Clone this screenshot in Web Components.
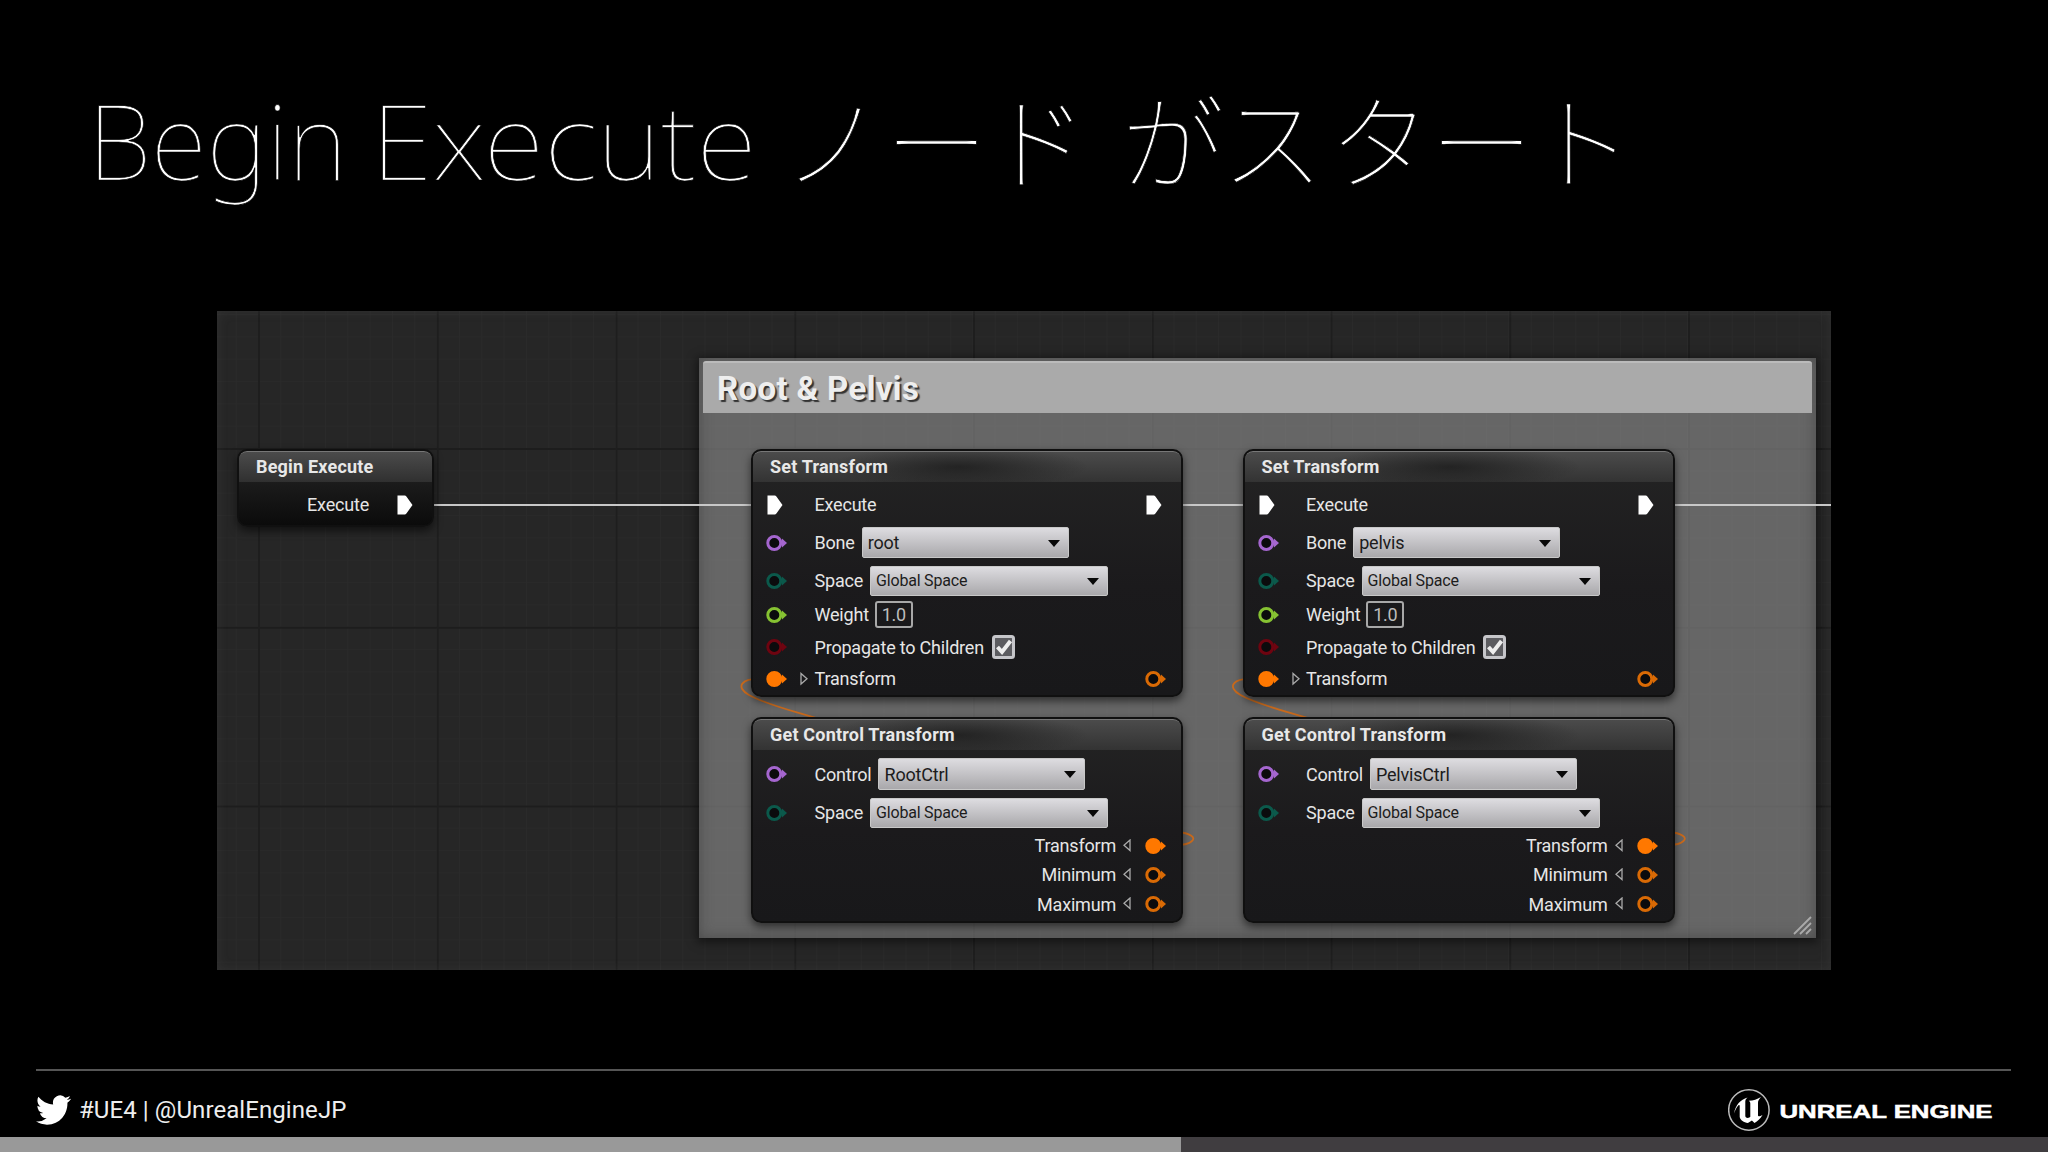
<!DOCTYPE html>
<html lang="ja">
<head>
<meta charset="utf-8">
<title>Begin Execute</title>
<style>
    html, body {
        margin: 0;
        height: 100%;
        background: #000;
        overflow: hidden;
        font-family: Roboto, "Noto Sans CJK JP", sans-serif;
    }
</style>
</head>
<body>
<slide-page>
    <slide-title slot="title"></slide-title>
    <graph-canvas>
        <graph-comment label="Root &amp; Pelvis"></graph-comment>
        <graph-wires></graph-wires>
        <graph-node class="begin" label="Begin Execute" style="left:20px; top:138px; width:197px; height:78px">
            <node-row h="45" out="exec" type="exec" near>Execute</node-row>
        </graph-node>
        <graph-node label="Set Transform" style="left:534px; top:138px; width:432px; height:248px">
            <node-row h="45" in="exec" out="exec">Execute</node-row>
            <node-row h="31" in="#a566cf">Bone<drop-down w="207" h="31" size="18">root</drop-down></node-row>
            <node-row h="45" in="#0b594b">Space<drop-down w="238" h="30" size="16">Global Space</drop-down></node-row>
            <node-row h="23" in="#86c232">Weight<value-box>1.0</value-box></node-row>
            <node-row h="42" in="#6e0410">Propagate to Children<check-box></check-box></node-row>
            <node-row h="21" in="#ff7800" filled arrow out="#d96a05">Transform</node-row>
        </graph-node>
        <graph-node label="Get Control Transform" style="left:534px; top:406px; width:432px; height:206px">
            <node-row h="48" in="#a566cf">Control<drop-down w="207" h="32" size="18">RootCtrl</drop-down></node-row>
            <node-row h="29" in="#0b594b">Space<drop-down w="238" h="30" size="16">Global Space</drop-down></node-row>
            <node-row h="37" out="#ff7800" filled back near>Transform</node-row>
            <node-row h="21" out="#d96a05" back near>Minimum</node-row>
            <node-row h="38" out="#d96a05" back near>Maximum</node-row>
        </graph-node>
        <graph-node label="Set Transform" style="left:1025.5px; top:138px; width:432px; height:248px">
            <node-row h="45" in="exec" out="exec">Execute</node-row>
            <node-row h="31" in="#a566cf">Bone<drop-down w="207" h="31" size="18">pelvis</drop-down></node-row>
            <node-row h="45" in="#0b594b">Space<drop-down w="238" h="30" size="16">Global Space</drop-down></node-row>
            <node-row h="23" in="#86c232">Weight<value-box>1.0</value-box></node-row>
            <node-row h="42" in="#6e0410">Propagate to Children<check-box></check-box></node-row>
            <node-row h="21" in="#ff7800" filled arrow out="#d96a05">Transform</node-row>
        </graph-node>
        <graph-node label="Get Control Transform" style="left:1025.5px; top:406px; width:432px; height:206px">
            <node-row h="48" in="#a566cf">Control<drop-down w="207" h="32" size="18">PelvisCtrl</drop-down></node-row>
            <node-row h="29" in="#0b594b">Space<drop-down w="238" h="30" size="16">Global Space</drop-down></node-row>
            <node-row h="37" out="#ff7800" filled back near>Transform</node-row>
            <node-row h="21" out="#d96a05" back near>Minimum</node-row>
            <node-row h="38" out="#d96a05" back near>Maximum</node-row>
        </graph-node>
    </graph-canvas>
    <slide-footer slot="footer">#UE4 | @UnrealEngineJP</slide-footer>
</slide-page>

<script>
    function define(name, render) {
        customElements.define(name, class extends HTMLElement {
            constructor() {
                super();
                const template = document.createElement('template');
                template.innerHTML = render(this);
                this.attachShadow({ mode: 'open' }).appendChild(template.content.cloneNode(true));
            }
        });
    }

    // white execution pins and coloured data pins share one box
    function pin(type, filled) {
        if (!type) return '';
        if (type === 'exec') {
            return `<svg width="21" height="22" viewBox="0 0 21 22"><path d="M1.500 1.500h7.200q1 0 1.700 1L16.500 11l-6.100 8.500q-.700 1-1.700 1H1.500z" fill="#fff"/></svg>`;
        }
        return `<svg width="21" height="22" viewBox="0 0 21 22"><circle cx="8.300" cy="11" r="6.500" fill="${filled ? type : '#0b0b0d'}" stroke="${type}" stroke-width="3"/><path d="M16 6.500L21 11l-5 4.500z" fill="${type}"/></svg>`;
    }

    define('slide-page', () => `
        <style>
            :host {
                display: flex;
                flex-direction: column;
                width: 2048px;
                height: 1152px;
                background: #000;
            }
            .title { height: 311px; }
            .graph { flex: 1; padding-left: 217px; }
        </style>
        <div class="title"><slot name="title"></slot></div>
        <div class="graph"><slot></slot></div>
        <slot name="footer"></slot>
    `);

    define('slide-title', () => `
        <style>
            :host { display: block; }
            svg { display: block; }
            /* black outline shaves the strokes down to a hairline */
            text { fill: #fff; font-weight: 100; stroke: #000; stroke-width: 0.7; }
            .latin { font-family: "Noto Sans", Roboto, sans-serif; font-size: 103px; }
            .kana { font-family: "Noto Sans CJK JP", sans-serif; font-size: 103px; }
        </style>
        <svg width="2048" height="260">
            <text class="latin" x="88" y="179.500" textLength="259" lengthAdjust="spacingAndGlyphs">Begin</text>
            <text class="latin" x="371" y="179.500" textLength="386" lengthAdjust="spacingAndGlyphs">Execute</text>
            <text class="kana" x="781 885 986" y="182">ノード</text>
            <text class="kana" x="1121 1221 1328 1430 1530" y="182">がスタート</text>
        </svg>
    `);

    define('graph-canvas', () => `
        <style>
            :host {
                display: block;
                position: relative;
                width: 1614px;
                height: 659px;
                overflow: hidden;
                background-color: #262626;
                background-image:
                    linear-gradient(90deg, #1e1e1e 2px, transparent 2px),
                    linear-gradient(#1d1d1d 2px, transparent 2px),
                    linear-gradient(90deg, #2a2a2a 1px, transparent 1px),
                    linear-gradient(#292929 1px, transparent 1px);
                background-size: 178.750px 178.750px, 178.750px 178.750px, 22.340px 22.340px, 22.340px 22.340px;
                background-position: 41px 0, 0 137px, 41px 0, 0 137px;
            }
            .edge {
                position: absolute;
                inset: 0;
                box-shadow: inset 0 0 12px rgba(110, 110, 110, 0.18);
            }
        </style>
        <div class="edge"></div>
        <slot></slot>
    `);

    define('graph-comment', el => `
        <style>
            :host {
                position: absolute;
                left: 482px;
                top: 47px;
                width: 1117px;
                height: 580px;
                box-sizing: border-box;
                padding: 3px 4px;
                background: rgba(139, 139, 139, 0.64);
                box-shadow: 0 2px 9px 2px rgba(0, 0, 0, 0.5), inset 0 0 14px rgba(50, 50, 50, 0.5);
            }
            .bar {
                display: flex;
                align-items: center;
                height: 52px;
                box-sizing: border-box;
                padding-left: 14px;
                border-radius: 3px 3px 0 0;
                border-top: 2px solid #bbb;
                background: #aaa;
                color: #eee;
                font-size: 33px;
                font-weight: 700;
                letter-spacing: 0.350px;
                text-shadow: 2px 2px 1px #333;
            }
            svg { position: absolute; right: 3px; bottom: 2px; }
        </style>
        <div class="bar">${el.getAttribute('label').replace('&', '&amp;')}</div>
        <svg width="20" height="20" fill="none" stroke="#aaa" stroke-width="1.800"><path d="M1 18L18 1M7 18L18 7M13 18l5-5"/></svg>
    `);

    define('graph-wires', () => `
        <style>
            :host { position: absolute; inset: 0; }
        </style>
        <svg width="1614" height="659" fill="none">
            <path d="M216 194H534M966 194h60M1458 194h156" stroke="#c8c8c8" stroke-width="2"/>
            <g id="link" stroke="#c96a1c" stroke-width="1.800">
                <path d="M545 368C524 367 518 376 532 384C550 394 580 401 602 408"/>
                <path d="M960 521C974 522 979 527 975 530C972 533 967 534 960 534"/>
            </g>
            <use href="#link" x="491.500"/>
        </svg>
    `);

    define('graph-node', el => `
        <style>
            :host {
                position: absolute;
                display: flex;
                flex-direction: column;
                box-sizing: border-box;
                border: 2px solid #101010;
                border-radius: 10px;
                overflow: hidden;
                background: linear-gradient(#242424, #1b1a1c 55%, #18181a);
                box-shadow: 0 4px 8px rgba(0, 0, 0, 0.55);
                color: #e6e6e6;
                font-size: 18px;
                letter-spacing: -0.200px;
            }
            :host(.begin) { background: linear-gradient(#1c1c1c 40%, #0b0b0b); }
            header {
                flex: none;
                height: 31px;
                box-sizing: border-box;
                padding-left: 17px;
                border-top: 1.500px solid #777;
                border-radius: 8px 8px 0 0;
                background:
                    radial-gradient(ellipse 130px 22px at 48% 50%, rgba(20, 20, 20, 0.650), transparent),
                    linear-gradient(#4b4b4b, #333);
                line-height: 29px;
                font-weight: 700;
                letter-spacing: 0.200px;
                color: #e8e8e8;
                white-space: nowrap;
            }
            :host(.begin) header { background: linear-gradient(#4b4b4b, #303030); }
        </style>
        <header>${el.getAttribute('label')}</header>
        <slot></slot>
    `);

    define('node-row', el => {
        const filled = el.hasAttribute('filled');
        const near = el.hasAttribute('near');
        const back = el.hasAttribute('back');
        return `
        <style>
            :host {
                display: flex;
                flex: none;
                align-items: center;
                height: ${el.getAttribute('h')}px;
                padding: 0 15px 0 13px;
                white-space: nowrap;
            }
            svg { display: block; flex: none; }
            .in { width: 48.500px; display: flex; align-items: center; }
            .arrow { margin-left: 12px; }
            .label { display: flex; align-items: center; ${near ? 'margin-left: auto;' : ''} }
            .out { margin-left: ${near ? (back ? '13px' : '27px') : 'auto'}; }
            .back { margin-left: 6px; }
        </style>
        ${near ? '' : `<span class="in">${pin(el.getAttribute('in'), filled)}${el.hasAttribute('arrow') ? '<svg class="arrow" width="10" height="14" fill="none" stroke="#aaa" stroke-width="1.300"><path d="M2 1.500v10.500l6-5.200z"/></svg>' : ''}</span>`}
        <span class="label"><slot></slot></span>
        ${back ? '<svg class="back" width="10" height="14" fill="none" stroke="#aaa" stroke-width="1.300"><path d="M8 1v10.500L2 6.300z"/></svg>' : ''}
        <span class="out">${pin(el.getAttribute('out'), filled && near)}</span>
    `;
    });

    define('drop-down', el => `
        <style>
            :host {
                display: flex;
                align-items: center;
                justify-content: space-between;
                box-sizing: border-box;
                width: ${el.getAttribute('w')}px;
                height: ${el.getAttribute('h')}px;
                margin-left: 7px;
                padding: 0 8px 0 5px;
                border: 1px solid #c8c8c8;
                border-radius: 2px;
                background: linear-gradient(#dddce0, #a9a8ab);
                color: #1c1c1c;
                font-size: ${el.getAttribute('size')}px;
            }
            svg { margin-top: 1px; }
        </style>
        <span><slot></slot></span>
        <svg width="12" height="7"><path d="M0 0h12L6 7z" fill="#080808"/></svg>
    `);

    define('value-box', () => `
        <style>
            :host {
                display: flex;
                align-items: center;
                justify-content: center;
                box-sizing: border-box;
                width: 38px;
                height: 27px;
                margin-left: 6px;
                border: 2px solid #a8a8a8;
                border-radius: 3px;
                color: #bdbdbd;
            }
        </style>
        <slot></slot>
    `);

    define('check-box', () => `
        <style>
            :host { display: block; margin-left: 8px; }
            svg { display: block; }
        </style>
        <svg width="23" height="24">
            <rect x="1.500" y="1.500" width="20" height="21" rx="2" fill="#5c5c60" stroke="#c6c6ca" stroke-width="3"/>
            <path d="M5.500 12l4.500 5L18.500 6" fill="none" stroke="#eee" stroke-width="4"/>
        </svg>
    `);

    define('slide-footer', () => `
        <style>
            :host { display: block; height: 83px; color: #eee; font-size: 24px; }
            .line { height: 2px; margin: 0 37px 0 36px; background: #555; }
            .row { display: flex; align-items: center; height: 65.500px; padding: 13px 50px 0 36px; box-sizing: border-box; }
            .tag { margin-left: 8px; flex: 1; letter-spacing: 0.080px; }
            svg { display: block; }
            .logo text { font: 700 19px "Liberation Sans", Arial, sans-serif; fill: #fff; stroke: #fff; stroke-width: 0.500; }
            .bar { height: 15px; background: linear-gradient(90deg, #999 1181px, #403d40 1181px); }
        </style>
        <div class="line"></div>
        <div class="row">
            <svg width="35" height="30" viewBox="0 2 24 20" preserveAspectRatio="none"><path fill="#fff" d="M23.950 4.570a10 10 0 0 1-2.820.770 4.960 4.960 0 0 0 2.160-2.720c-.950.550-2 .950-3.130 1.180a4.920 4.920 0 0 0-8.380 4.480C7.690 8.090 4.070 6.130 1.640 3.160a4.820 4.820 0 0 0-.670 2.480c0 1.710.870 3.210 2.190 4.090a4.900 4.900 0 0 1-2.230-.610v.060a4.920 4.920 0 0 0 3.950 4.830 5 5 0 0 1-2.210.080 4.940 4.940 0 0 0 4.600 3.420A9.870 9.870 0 0 1 0 19.540a13.990 13.990 0 0 0 7.550 2.210c9.050 0 14-7.500 14-13.980 0-.210 0-.420-.020-.630a9.940 9.940 0 0 0 2.460-2.550z"/></svg>
            <span class="tag"><slot></slot></span>
            <svg class="logo" width="270" height="46">
                <circle cx="20.900" cy="23" r="20.200" fill="none" stroke="#bbb" stroke-width="1.500"/>
                <path fill="#fff" d="M6 26.500C7.500 18 12.500 12.500 19.500 10.500c-2 1.500-2.200 3-2.200 5V29c0 2.200 3.800 2.500 5 .800V16.500c0-1.300-.500-2-1.600-2.700 4.800-.300 8.300-1.500 12.300-3.800-2.300 2.500-3 4-3 6v12.200c0 1.600 1.800 1.500 4.500-.200-2.400 4.300-4.800 6-8 8l-2.600-2.500-4 2.500c-4-.500-7.500-2.700-8.200-6V19c0-2.500-2.700-.500-5.700 7.500z"/>
                <text x="51.500" y="31" textLength="213" lengthAdjust="spacingAndGlyphs">UNREAL ENGINE</text>
            </svg>
        </div>
        <div class="bar"></div>
    `);
</script>
</body>
</html>
